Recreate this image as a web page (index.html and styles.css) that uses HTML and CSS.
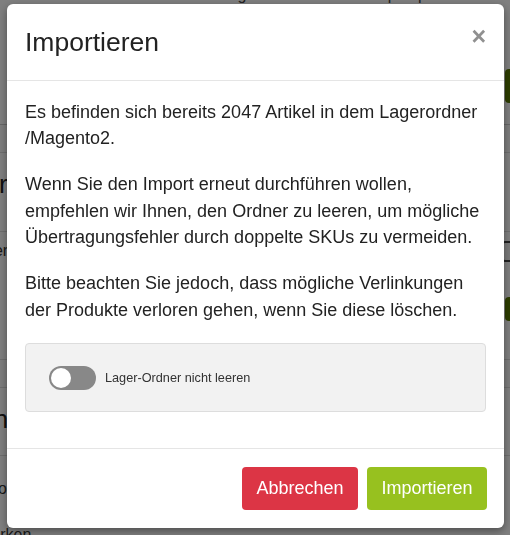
FILE: index.html
```html
<!DOCTYPE html>
<html>
<head>
    <title>Importieren</title>
    <link rel="stylesheet" href="styles.css">
</head>
<body>
    <div class="page">
        <div class="row row-top">
            <div class="top-text">Artikel aus dem Lagerordner in den Shop importieren</div>
            <div class="row-right"><span class="bg-btn bg-green"></span></div>
        </div>
        <div class="row row-band"></div>
        <div class="row row-c">
            <span class="bg-big">Lagerordner</span>
        </div>
        <div class="row row-d">
            <span class="bg-small">Lagerordner</span>
            <div class="row-right col">
                <span class="bg-btn bg-grey"></span>
                <span class="bg-btn bg-green"></span>
            </div>
        </div>
        <div class="row row-band"></div>
        <div class="row row-f">
            <span class="bg-big">Gruppen</span>
        </div>
        <div class="row row-g">
            <span class="bg-small">Foto</span>
            <span class="bg-last">Marken</span>
        </div>
    </div>

    <div class="overlay">
        <div class="modal">
            <div class="modal-header">
                <h4 class="modal-title">Importieren</h4>
                <button type="button" class="close">&times;</button>
            </div>
            <div class="modal-body">
                <p>Es befinden sich bereits 2047 Artikel in dem Lagerordner /Magento2.</p>
                <p>Wenn Sie den Import erneut durchführen wollen, empfehlen wir Ihnen, den Ordner zu leeren, um mögliche Übertragungsfehler durch doppelte SKUs zu vermeiden.</p>
                <p>Bitte beachten Sie jedoch, dass mögliche Verlinkungen der Produkte verloren gehen, wenn Sie diese löschen.</p>
                <div class="option-box">
                    <label class="switch">
                        <span class="track"><span class="knob"></span></span>
                        <span class="switch-label">Lager-Ordner nicht leeren</span>
                    </label>
                </div>
            </div>
            <div class="modal-footer">
                <button type="button" class="btn btn-danger">Abbrechen</button>
                <button type="button" class="btn btn-success">Importieren</button>
            </div>
        </div>
    </div>
</body>
</html>
```

FILE: styles.css
```css
body { margin: 0; font-family: "Liberation Sans", Arial, sans-serif; color: #222; background: #fff; overflow: hidden; }

/* page behind the dialog */
.page { height: 535px; overflow: hidden; }
.row { display: flex; align-items: center; justify-content: space-between; border-bottom: 1px solid #ddd; overflow: hidden; }
.row-top { height: 124px; align-items: flex-start; border-bottom-color: #ccc; }
.top-text { margin: -14px 0 0 105px; font-size: 16px; color: #444; }
.row-right { display: flex; justify-content: flex-end; }
.row-top .row-right { margin-top: 69px; }
.col { flex-direction: column; align-items: flex-end; gap: 35px; }
.bg-btn { display: block; width: 80px; margin-right: -75px; border-radius: 4px; }
.bg-green { background: #5a7a00; height: 34px; }
.bg-grey { background: #f5f5f5; border: 2px solid #444; height: 17px; }
.row-d .bg-green { height: 24px; }
.row-band { height: 27px; background: #fafafa; }
.row-c { height: 78px; }
.row-c .bg-big { margin-bottom: 16px; }
.row-d { height: 127px; align-items: flex-start; }
.row-d .bg-small { margin-top: 10px; }
.row-d .row-right { margin-top: 9px; }
.row-f { height: 67px; }
.row-g { height: 100px; flex-direction: column; align-items: flex-start; justify-content: flex-start; border-bottom: none; }
.bg-big { margin-left: -134px; font-size: 26px; color: #222; }
.row-f .bg-big { margin-left: -93px; margin-bottom: 4px; }
.bg-small { margin-left: -79px; font-size: 16px; color: #333; }
.row-g .bg-small { margin: 24px 0 0 -25px; }
.bg-last { margin: 28px 0 0 -22px; font-size: 16px; color: #333; }

/* dialog */
.overlay { position: fixed; top: 0; left: 0; right: 0; bottom: 0; background: rgba(0, 0, 0, 0.5); padding: 4px 6px 0 7px; }
.modal { width: 497px; height: 524px; background: #fff; border-radius: 6px; box-shadow: 0 3px 9px rgba(0, 0, 0, 0.4); display: flex; flex-direction: column; overflow: hidden; }
.modal-header { display: flex; justify-content: space-between; align-items: flex-start; padding: 18px 18px 18px 18px; border-bottom: 1px solid #e5e5e5; }
.modal-title { margin: 0; font-size: 26.5px; font-weight: normal; line-height: 40px; color: #222; }
.close { margin-top: 4px; padding: 0; border: none; background: none; font-family: "Liberation Sans", Arial, sans-serif; font-size: 25px; font-weight: bold; line-height: 20px; color: #909090; cursor: pointer; }
.modal-body { padding: 17.5px 18px 18px; flex: 1; }
.modal-body p { margin: 0 0 19.5px; font-size: 18px; line-height: 26.5px; color: #222; }
.option-box { margin-top: 20px; height: 67px; padding: 0 23px; display: flex; align-items: center; background: #f2f2f2; border: 1px solid #ddd; border-radius: 4px; }
.switch { display: flex; align-items: center; gap: 9px; }
.track { width: 47px; height: 24px; border-radius: 12px; background: #888; display: flex; align-items: center; padding: 0 2px; box-sizing: border-box; }
.knob { width: 20px; height: 20px; border-radius: 50%; background: #fff; }
.switch-label { font-size: 12.7px; color: #333; }
.modal-footer { display: flex; justify-content: flex-end; gap: 9px; padding: 18px 17px 18px; border-top: 1px solid #e5e5e5; }
.btn { height: 43px; padding: 0 14.5px; border: none; border-radius: 4px; font-family: "Liberation Sans", Arial, sans-serif; font-size: 18px; color: #fff; cursor: pointer; }
.btn-danger { background: #dc3545; }
.btn-success { background: #97c11f; }
```
